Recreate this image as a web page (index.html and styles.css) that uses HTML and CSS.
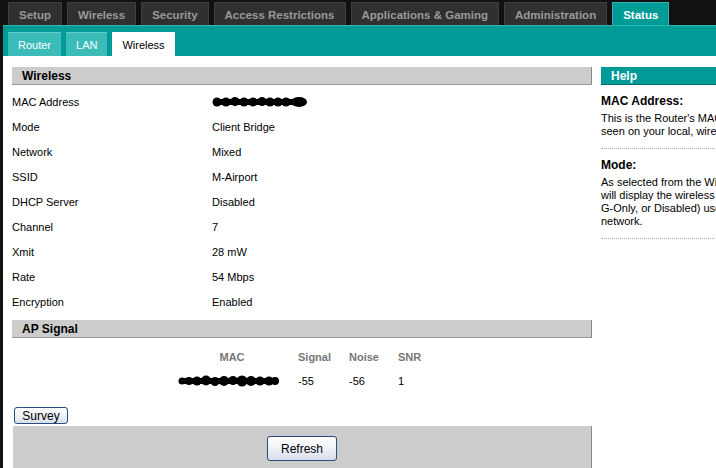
FILE: index.html
```html
<!DOCTYPE html>
<html lang="en">
<head>
  <meta charset="UTF-8">
  <title>Status - Wireless</title>
  <link rel="stylesheet" href="styles.css">
</head>
<body>
  <div class="page">
    <div class="topnav">
      <a class="tab">Setup</a>
      <a class="tab">Wireless</a>
      <a class="tab">Security</a>
      <a class="tab">Access Restrictions</a>
      <a class="tab">Applications &amp; Gaming</a>
      <a class="tab">Administration</a>
      <a class="tab active">Status</a>
    </div>
    <div class="subnav">
      <a class="subtab">Router</a>
      <a class="subtab">LAN</a>
      <a class="subtab active">Wireless</a>
    </div>
    <div class="content">
      <div class="main">
        <div class="section-title">Wireless</div>
        <div class="rows">
          <div class="row"><span class="label">MAC Address</span>
            <span class="value">
              <svg class="blot" width="96" height="12" viewBox="0 0 96 12">
                <rect x="4" y="3" width="86" height="6" fill="#000"/>
                <circle cx="5" cy="6" r="4.5"/><circle cx="14" cy="6" r="4.5"/>
                <circle cx="23" cy="5.5" r="4.5"/><circle cx="32" cy="6" r="4.5"/>
                <circle cx="41" cy="6" r="4.5"/><circle cx="50" cy="5.5" r="4.5"/>
                <circle cx="58" cy="6" r="4.5"/><circle cx="66" cy="6" r="4.5"/>
                <circle cx="74" cy="6" r="4.5"/><ellipse cx="87" cy="6" rx="8" ry="5"/>
              </svg>
            </span>
          </div>
          <div class="row"><span class="label">Mode</span><span class="value">Client Bridge</span></div>
          <div class="row"><span class="label">Network</span><span class="value">Mixed</span></div>
          <div class="row"><span class="label">SSID</span><span class="value">M-Airport</span></div>
          <div class="row"><span class="label">DHCP Server</span><span class="value">Disabled</span></div>
          <div class="row"><span class="label">Channel</span><span class="value">7</span></div>
          <div class="row"><span class="label">Xmit</span><span class="value">28 mW</span></div>
          <div class="row"><span class="label">Rate</span><span class="value">54 Mbps</span></div>
          <div class="row"><span class="label">Encryption</span><span class="value">Enabled</span></div>
        </div>

        <div class="section-title ap">AP Signal</div>
        <div class="signal">
          <div class="th mac">MAC</div>
          <div class="th">Signal</div>
          <div class="th">Noise</div>
          <div class="th">SNR</div>
          <div class="td mac">
            <svg class="blot" width="102" height="14" viewBox="0 0 102 14">
              <rect x="4" y="4" width="94" height="6" fill="#000"/>
              <circle cx="4" cy="7" r="3.5"/><circle cx="11" cy="7" r="4"/>
              <circle cx="19" cy="7" r="4.5"/><circle cx="28" cy="6.5" r="5"/>
              <circle cx="37" cy="7.5" r="4.5"/><circle cx="46" cy="7" r="5"/>
              <circle cx="55" cy="6.5" r="4.5"/><circle cx="64" cy="7" r="5.5"/>
              <circle cx="73" cy="7" r="5"/><circle cx="82" cy="7" r="4.5"/>
              <circle cx="91" cy="7" r="4.5"/><circle cx="97" cy="7" r="4"/>
            </svg>
          </div>
          <div class="td">-55</div>
          <div class="td">-56</div>
          <div class="td">1</div>
        </div>

        <button class="btn survey">Survey</button>
        <div class="footer">
          <button class="btn refresh">Refresh</button>
        </div>
      </div>

      <div class="help">
        <div class="help-title">Help</div>
        <div class="help-item">
          <h3>MAC Address:</h3>
          <p>This is the Router's MAC Address, as<br>seen on your local, wireless network.</p>
        </div>
        <div class="help-item">
          <h3>Mode:</h3>
          <p>As selected from the Wireless tab, this<br>will display the wireless mode (Mixed,<br>G-Only, or Disabled) used by the<br>network.</p>
        </div>
      </div>
    </div>
  </div>
</body>
</html>
```

FILE: styles.css
```css
body {
  margin: 0;
  background: #111;
  font-family: "Liberation Sans", Arial, sans-serif;
  font-size: 11px;
  color: #000;
  overflow: hidden;
}
.page {
  margin-left: 3px;
  height: 468px;
  display: flex;
  flex-direction: column;
}
.topnav {
  display: flex;
  gap: 5px;
  padding: 2px 0 0 8px;
  height: 24px;
  margin-left: -3px;
}
.tab {
  box-sizing: border-box;
  height: 24px;
  line-height: 25px;
  padding: 0 10px;
  background: #303030;
  border: 1px solid #3e3e3e;
  border-bottom: none;
  color: #999;
  font-size: 11.5px;
  font-weight: bold;
  white-space: nowrap;
}
.tab.active {
  background: #009a97;
  border-color: #2bb5b2;
  color: #fff;
}
.subnav {
  display: flex;
  gap: 5px;
  height: 24px;
  padding: 6px 0 0 5px;
  background: #009a97;
  border-top: 1px solid #2bb5b2;
  margin-top: -1px;
}
.subtab {
  box-sizing: border-box;
  height: 24px;
  line-height: 25px;
  padding: 0 10px;
  background: #3bbcb8;
  border-top: 1px solid #5fcfcb;
  color: #fff;
  font-size: 11px;
}
.subtab.active {
  background: #fff;
  border-color: #fff;
  color: #000;
}
.content {
  flex: 1;
  display: flex;
  background: #fff;
  overflow: hidden;
}
.main {
  width: 580px;
  flex-shrink: 0;
  margin-left: 9px;
  padding-top: 11px;
}
.section-title {
  height: 17px;
  line-height: 18px;
  padding-left: 10px;
  background: #ccc;
  border-bottom: 1px solid #999;
  border-right: 1px solid #888;
  font-size: 12px;
  font-weight: bold;
}
.section-title.ap {
  margin-top: 6px;
}
.rows {
  padding-top: 4px;
}
.row {
  display: flex;
  height: 25px;
  align-items: center;
}
.label {
  width: 200px;
}
.value {
  display: flex;
  align-items: center;
}
.blot circle,
.blot ellipse {
  fill: #000;
}
.signal {
  display: grid;
  grid-template-columns: 128px 51px 49px 40px;
  grid-auto-rows: 24px;
  align-items: center;
  margin: 7px 0 0 158px;
}
.th {
  color: #777;
  font-weight: bold;
}
.mac {
  text-align: center;
  padding-right: 4px;
}
.td.mac {
  display: flex;
  justify-content: center;
  padding-right: 10px;
}
.btn {
  font-family: "Liberation Sans", Arial, sans-serif;
  font-size: 12px;
  color: #000;
  border: 1px solid #2b4c80;
  border-radius: 3px;
  background: linear-gradient(#fefefe, #f1f3f8 45%, #d7deea);
  padding: 0;
}
.survey {
  display: block;
  width: 54px;
  height: 17px;
  line-height: 14px;
  margin: 14px 0 0 2px;
}
.footer {
  margin: 2px 0 0 1px;
  height: 42px;
  padding-top: 10px;
  box-sizing: border-box;
  background: #ccc;
  border-right: 1px solid #888;
  text-align: center;
}
.refresh {
  width: 70px;
  height: 25px;
}
.help {
  margin-left: 9px;
  padding-top: 11px;
  width: 200px;
  flex-shrink: 0;
}
.help-title {
  height: 17px;
  line-height: 18px;
  padding-left: 10px;
  background: #009a97;
  border-bottom: 1px solid #00706d;
  color: #fff;
  font-size: 12px;
  font-weight: bold;
}
.help-item {
  padding: 9px 0 10px;
  border-bottom: 1px dotted #aaa;
}
.help-item h3 {
  margin: 0 0 4px;
  font-size: 12px;
  line-height: 14px;
}
.help-item p {
  margin: 0;
  line-height: 13px;
  white-space: nowrap;
}
```
